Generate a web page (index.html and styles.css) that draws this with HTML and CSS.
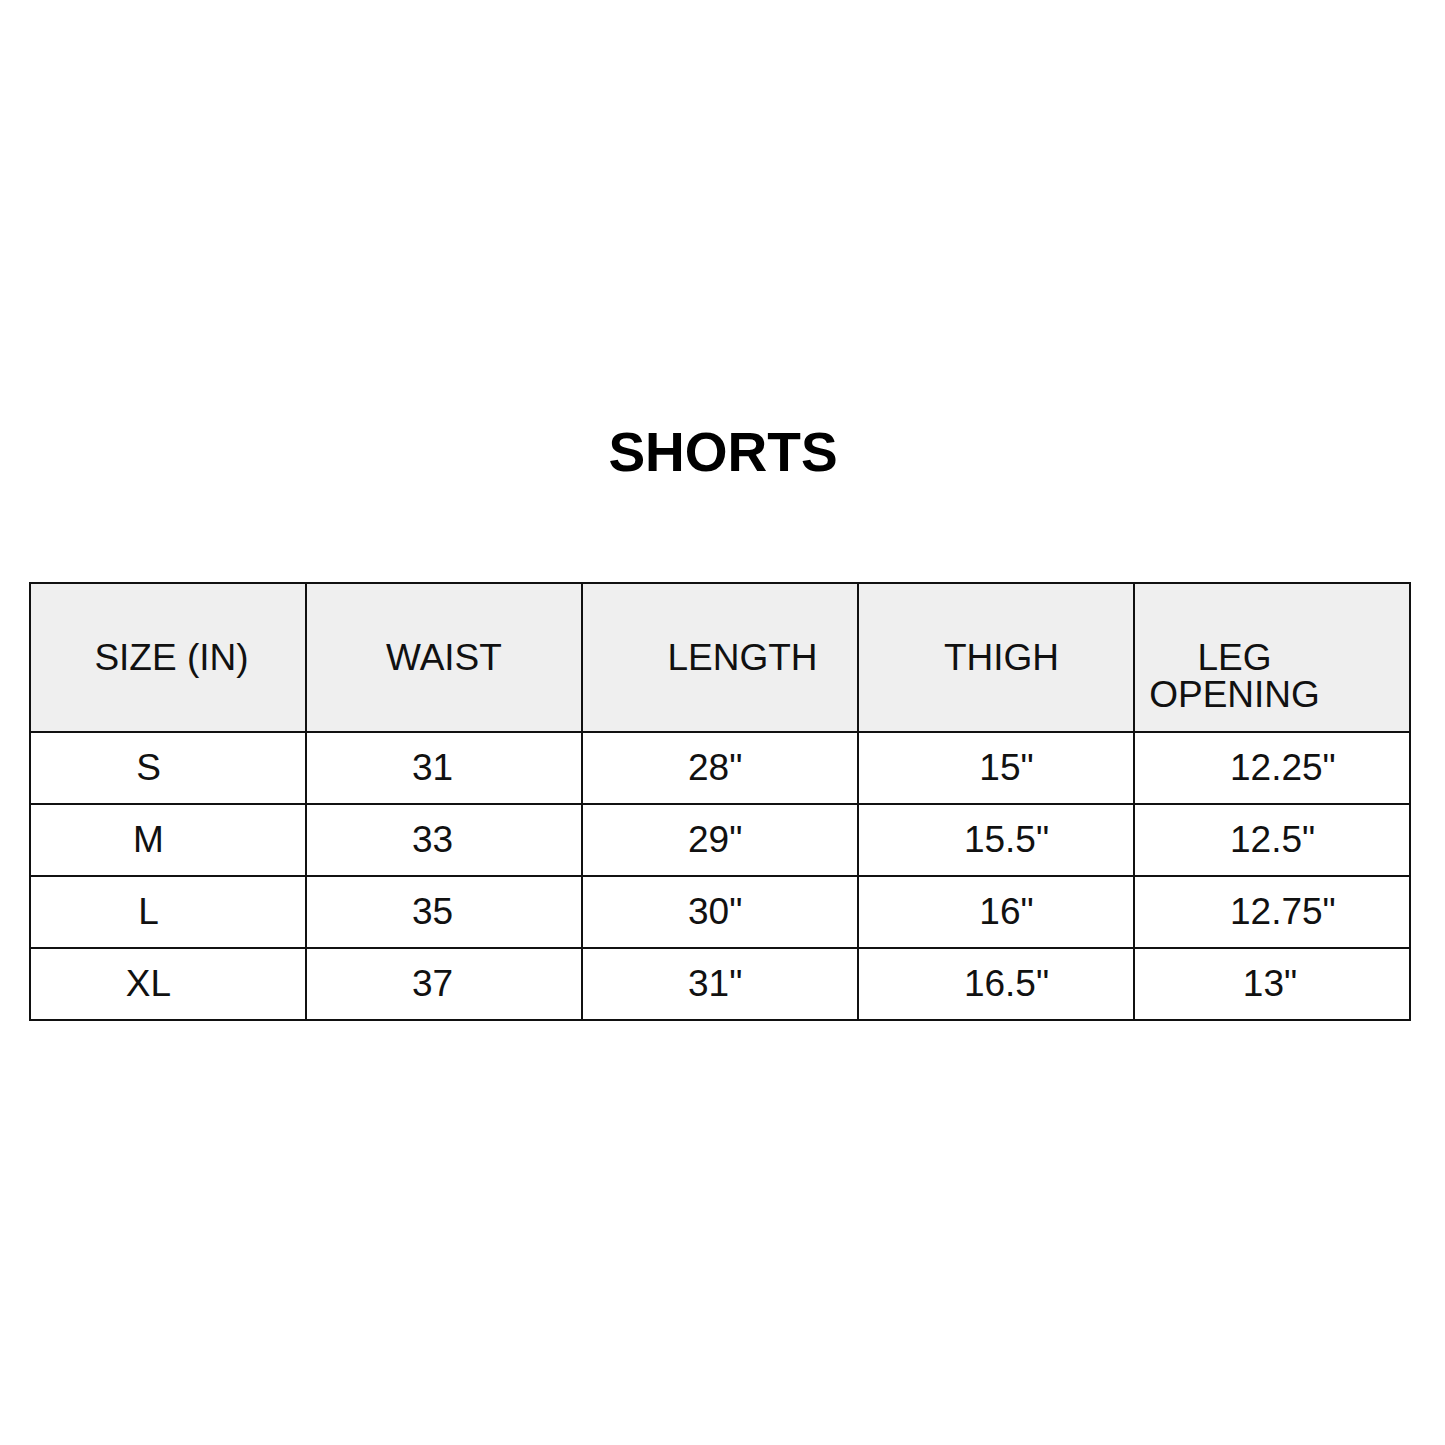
FILE: index.html
```html
<!DOCTYPE html>
<html>
<head>
<meta charset="utf-8">
<link rel="stylesheet" href="styles.css">
</head>
<body>
<h1 class="title">SHORTS</h1>
<table class="chart">
  <thead>
    <tr>
      <th>SIZE (IN)</th>
      <th>WAIST</th>
      <th>LENGTH</th>
      <th>THIGH</th>
      <th><span class="stack"><span class="ln">LEG</span><span class="ln">OPENING</span></span></th>
    </tr>
  </thead>
  <tbody>
    <tr><td>S</td><td>31</td><td>28"</td><td>15"</td><td>12.25"</td></tr>
    <tr><td>M</td><td>33</td><td>29"</td><td>15.5"</td><td>12.5"</td></tr>
    <tr><td>L</td><td>35</td><td>30"</td><td>16"</td><td>12.75"</td></tr>
    <tr><td>XL</td><td>37</td><td>31"</td><td>16.5"</td><td class="mid">13"</td></tr>
  </tbody>
</table>
</body>
</html>
```
FILE: styles.css
```css
html, body {
  margin: 0;
  padding: 0;
  background: #ffffff;
}
body {
  width: 1445px;
  height: 1445px;
  overflow: hidden;
}
.title {
  margin: 425px 0 0 0;
  font-family: "Liberation Sans", Arial, sans-serif;
  font-weight: bold;
  font-size: 55px;
  line-height: 55px;
  text-align: center;
  color: #000;
  padding-left: 1px;
}
.chart {
  margin: 102px 0 0 29px;
  border-collapse: collapse;
  width: 1382px;
  table-layout: fixed;
  font-family: "Liberation Sans", Arial, sans-serif;
  font-size: 37px;
  color: #111;
}
.chart th, .chart td {
  border: 2px solid #111;
  padding: 0;
  font-weight: normal;
}
.chart th {
  background: #efefef;
  height: 149px;
  vertical-align: top;
  padding-top: 55px;
  line-height: 37px;
  text-align: center;
  box-sizing: border-box;
}
.chart td {
  height: 70px;
  line-height: 40px;
  vertical-align: middle;
  text-align: center;
}
/* header column offsets */
.chart th:nth-child(1) { padding-left: 7px; }
.chart th:nth-child(3) { padding-left: 45px; }
.chart th:nth-child(4) { padding-left: 11px; }
.chart th:nth-child(5) { padding-right: 75px; }
.stack { display: inline-flex; flex-direction: column; align-items: center; }
.ln { display: block; height: 37px; line-height: 37px; }
/* body column offsets */
.chart td:nth-child(1) { padding-right: 39px; }
.chart td:nth-child(2) { text-align: left; padding-left: 105px; }
.chart td:nth-child(3) { text-align: left; padding-left: 105px; }
.chart td:nth-child(4) { padding-left: 21px; }
.chart td:nth-child(5) { text-align: left; padding-left: 95px; }
.chart td.mid { text-align: center; padding-left: 0; padding-right: 4px; }
```
